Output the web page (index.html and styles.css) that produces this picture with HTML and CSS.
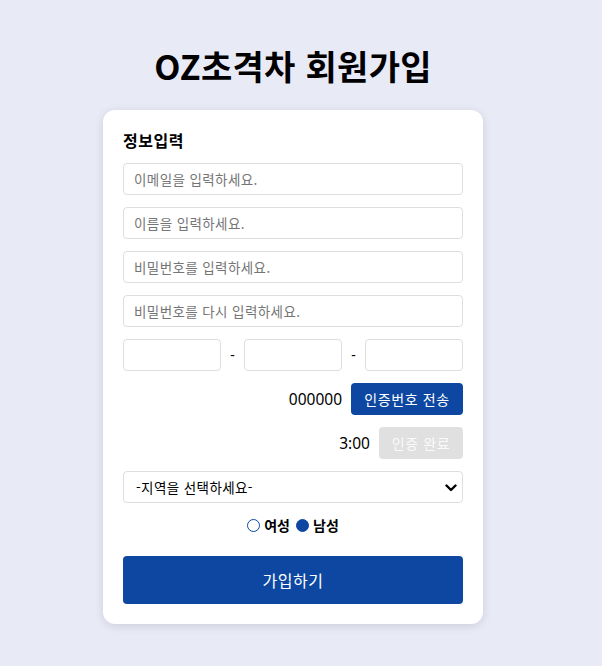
FILE: index.html
```html
<!DOCTYPE html>
<html lang="ko">
<head>
<meta charset="utf-8">
<title>OZ초격차 회원가입</title>
<link rel="stylesheet" href="styles.css">
</head>
<body>
<main class="page">
  <h1 class="title">OZ초격차 회원가입</h1>
  <form class="card">
    <h2 class="section">정보입력</h2>
    <div class="fields">
      <input class="field" type="text" placeholder="이메일을 입력하세요.">
      <input class="field" type="text" placeholder="이름을 입력하세요.">
      <input class="field" type="password" placeholder="비밀번호를 입력하세요.">
      <input class="field" type="password" placeholder="비밀번호를 다시 입력하세요.">
      <div class="phone">
        <input class="field phone-part" type="text">
        <span class="dash">-</span>
        <input class="field phone-part" type="text">
        <span class="dash">-</span>
        <input class="field phone-part" type="text">
      </div>
      <div class="verify">
        <span class="code">000000</span>
        <button class="btn btn-send" type="button">인증번호 전송</button>
      </div>
      <div class="verify">
        <span class="code">3:00</span>
        <button class="btn btn-done" type="button" disabled>인증 완료</button>
      </div>
      <div class="select-wrap">
        <select class="field select">
          <option>-지역을 선택하세요-</option>
        </select>
        <svg class="chev" width="12" height="8" viewBox="0 0 12 8"><path d="M1.5 1.5 L6 6 L10.5 1.5" fill="none" stroke="#000" stroke-width="2.4" stroke-linecap="round" stroke-linejoin="round"/></svg>
      </div>
      <div class="gender">
        <label class="opt"><span class="radio"></span>여성</label>
        <label class="opt"><span class="radio on"></span>남성</label>
      </div>
    </div>
    <button class="btn btn-submit" type="button">가입하기</button>
  </form>
</main>
</body>
</html>
```

FILE: styles.css
```css
* { box-sizing: border-box; }
html, body { margin: 0; padding: 0; }
body {
  background: #e8eaf6;
  font-family: "Noto Sans", "Noto Sans CJK KR", sans-serif;
  color: #000;
  min-height: 666px;
}
.page {
  display: flex;
  flex-direction: column;
  align-items: center;
  padding: 43px 16px 0 0;
}
.title {
  margin: 0 0 21px;
  font-family: "Noto Sans CJK KR", sans-serif;
  font-size: 34px;
  line-height: 46px;
  font-weight: 700;
  letter-spacing: 0.3px;
}
.card {
  width: 380px;
  background: #fff;
  border-radius: 12px;
  box-shadow: 0 2px 10px rgba(0, 0, 0, 0.12);
  padding: 20px 20px 20px;
  display: flex;
  flex-direction: column;
}
.section {
  margin: 0 0 13px;
  font-family: "Noto Sans CJK KR", sans-serif;
  font-size: 16px;
  line-height: 20px;
  font-weight: 700;
  letter-spacing: 0.5px;
}
.fields {
  display: flex;
  flex-direction: column;
  gap: 12px;
}
.field {
  width: 100%;
  height: 32px;
  border: 1px solid #dedede;
  border-radius: 4px;
  padding: 0 10px;
  font-family: "Noto Sans CJK KR", sans-serif;
  font-size: 13.5px;
  letter-spacing: 0.4px;
  color: #000;
  background: #fff;
  outline: none;
}
.field::placeholder { color: #757575; }
.phone {
  display: flex;
  align-items: center;
  justify-content: space-between;
}
.phone-part { width: 98px; }
.dash { font-size: 14px; line-height: 32px; }
.verify {
  display: flex;
  justify-content: flex-end;
  align-items: center;
  gap: 9px;
  height: 32px;
}
.code {
  font-family: "Noto Sans", sans-serif;
  font-size: 15.5px;
}
.btn {
  border: none;
  border-radius: 4px;
  font-family: "Noto Sans CJK KR", sans-serif;
  color: #fff;
  cursor: pointer;
}
.btn-send {
  width: 112px;
  height: 32px;
  background: #0d47a1;
  font-size: 14px;
  letter-spacing: 0.6px;
}
.btn-done {
  width: 84px;
  height: 32px;
  background: #e0e0e0;
  color: #fafafa;
  font-size: 14px;
  letter-spacing: 0.6px;
}
.select-wrap { position: relative; }
.select {
  appearance: none;
  -webkit-appearance: none;
  padding-left: 12px;
  font-size: 13.5px;
}
.chev {
  position: absolute;
  right: 6px;
  top: 13px;
}
.gender {
  display: flex;
  justify-content: center;
  align-items: center;
  gap: 6px;
  height: 20px;
}
.opt {
  display: flex;
  align-items: center;
  gap: 4px;
  font-family: "Noto Sans CJK KR", sans-serif;
  font-size: 14px;
  font-weight: 700;
}
.radio {
  width: 13px;
  height: 13px;
  border-radius: 50%;
  border: 1.5px solid #0d47a1;
  background: #fff;
}
.radio.on { background: #0d47a1; }
.btn-submit {
  margin-top: 21px;
  height: 48px;
  width: 100%;
  background: #0d47a1;
  font-size: 16px;
  letter-spacing: 0.5px;
}
```
